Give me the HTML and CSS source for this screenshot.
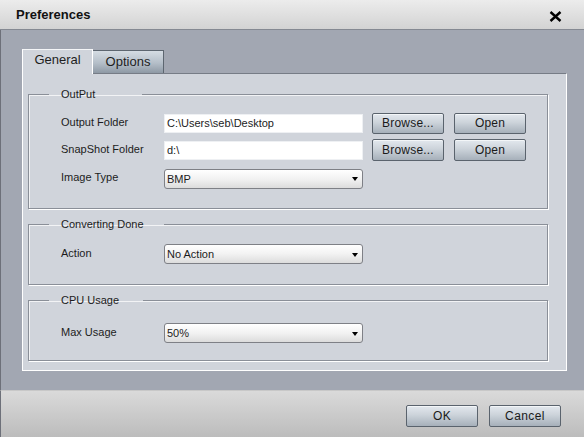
FILE: index.html
```html
<!DOCTYPE html>
<html>
<head>
<meta charset="utf-8">
<link rel="stylesheet" href="styles.css">
</head>
<body>
<div class="window">
  <div class="titlebar">
    <span class="title">Preferences</span>
    <svg class="close" width="13" height="11" viewBox="0 0 13 11"><path d="M1.5 1 L11.5 10 M11.5 1 L1.5 10" stroke="#000" stroke-width="2.4" fill="none"/></svg>
  </div>
  <div class="main">
    <div class="tabs">
      <div class="tab tab-active">General</div>
      <div class="tab tab-inactive">Options</div>
    </div>
    <div class="panel">
      <fieldset class="group group-output">
        <legend class="legend legend-output">OutPut</legend>
        <div class="row">
          <span class="label">Output Folder</span>
          <div class="input">C:\Users\seb\Desktop</div>
          <div class="btn btn-browse">Browse...</div>
          <div class="btn btn-open">Open</div>
        </div>
        <div class="row row-2">
          <span class="label">SnapShot Folder</span>
          <div class="input">d:\</div>
          <div class="btn btn-browse">Browse...</div>
          <div class="btn btn-open">Open</div>
        </div>
        <div class="row row-3">
          <span class="label">Image Type</span>
          <div class="select"><span>BMP</span><span class="arrow"></span></div>
        </div>
      </fieldset>
      <fieldset class="group group-done">
        <legend class="legend legend-done">Converting Done</legend>
        <div class="row row-sel">
          <span class="label">Action</span>
          <div class="select"><span>No Action</span><span class="arrow"></span></div>
        </div>
      </fieldset>
      <fieldset class="group group-cpu">
        <legend class="legend legend-cpu">CPU Usage</legend>
        <div class="row row-sel">
          <span class="label">Max Usage</span>
          <div class="select"><span>50%</span><span class="arrow"></span></div>
        </div>
      </fieldset>
    </div>
  </div>
  <div class="footer">
    <div class="btn btn-footer">OK</div>
    <div class="btn btn-footer btn-cancel">Cancel</div>
  </div>
</div>
</body>
</html>
```

FILE: styles.css
```css
* { box-sizing: border-box; }
html, body { margin: 0; padding: 0; }
body {
  width: 584px;
  height: 437px;
  overflow: hidden;
  font-family: "Liberation Sans", Arial, sans-serif;
  color: #1c1c1c;
  background: #a2a7b2;
}
.window {
  width: 584px;
  height: 437px;
  display: flex;
  flex-direction: column;
}
.titlebar {
  height: 30px;
  flex: none;
  display: flex;
  align-items: center;
  justify-content: space-between;
  padding: 0 22px 0 16px;
  background: linear-gradient(#ececec, #d3d3d3);
  border-bottom: 1px solid #858992;
}
.title {
  font-weight: bold;
  font-size: 13px;
  color: #111;
  margin-top: -1px;
}
.close { margin-top: 3px; }
.main {
  flex: none;
  height: 360px;
  padding: 19px 17px 0 21px;
  background: #a2a7b2;
  border-left: 1px solid #6d7079;
  display: flex;
  flex-direction: column;
}
.tabs {
  display: flex;
  align-items: flex-end;
  height: 24px;
  flex: none;
}
.tab {
  font-size: 13px;
  text-align: center;
  line-height: 20px;
  padding-bottom: 2px;
  color: #1e1e1e;
}
.tab-active {
  width: 71px;
  height: 25px;
  margin-bottom: -1px;
  background: #d0d4db;
  border-top: 1px solid #f4f5f7;
  border-left: 1px solid #ffffff;
  border-right: 1px solid #ffffff;
  position: relative;
  z-index: 1;
}
.tab-inactive {
  width: 71px;
  height: 23px;
  line-height: 22px;
  padding: 0;
  background: linear-gradient(#d5dce3, #b4bec8 55%, #8e99a5);
  border: 1px solid #5d6670;
  border-bottom: none;
  border-left: none;
}
.panel {
  height: 298px;
  flex: none;
  background: #d0d4db;
  border-top: 1px solid #767c86;
  border-left: 1px solid #ffffff;
  border-right: 1px solid #ffffff;
  border-bottom: 1px solid #ffffff;
  padding: 14px 18px 0 5px;
  display: flex;
  flex-direction: column;
}
.group {
  margin: 0;
  padding: 0 0 0 32px;
  border: 1px solid #8a8f98;
  box-shadow: 1px 1px 0 #ffffff, inset 1px 1px 0 #f2f3f5;
  min-width: 0;
}
.group-output { padding-top: 12px; padding-bottom: 19px; }
.group-done { margin-top: 9px; padding-top: 13px; padding-bottom: 20px; }
.group-cpu { margin-top: 9px; padding-top: 16px; padding-bottom: 17px; }
.legend {
  font-size: 11px;
  line-height: 13px;
  padding: 0 0 0 12px;
  margin-left: -12px;
  color: #1c1c1c;
}
.legend-output { width: 93px; }
.legend-done { width: 115px; }
.legend-cpu { width: 94px; }
.row {
  display: flex;
  align-items: center;
  height: 21px;
}
.row-2 { margin-top: 5px; height: 22px; }
.row-3 { margin-top: 7px; }
.row-sel { height: 20px; }
.label {
  width: 103px;
  flex: none;
  font-size: 11px;
  margin-top: -3px;
}
.input {
  width: 199px;
  height: 19px;
  flex: none;
  background: #ffffff;
  border: 1px solid #eef0f3;
  font-size: 11px;
  line-height: 17px;
  padding-left: 2px;
}
.select {
  width: 199px;
  height: 20px;
  flex: none;
  display: flex;
  align-items: center;
  justify-content: space-between;
  border: 1px solid #7e8086;
  border-radius: 3px;
  background: linear-gradient(#ffffff, #f2f2f2 50%, #dcdcdc);
  font-size: 11px;
  padding: 0 4px 0 2px;
}
.arrow {
  width: 0;
  height: 0;
  border-left: 3.5px solid transparent;
  border-right: 3.5px solid transparent;
  border-top: 4px solid #000;
  margin-top: 1px;
}
.btn {
  flex: none;
  width: 72px;
  height: 21px;
  border: 1px solid #5a636d;
  border-radius: 2px;
  background: linear-gradient(#e3e8ee, #ccd3da 45%, #a6b0ba);
  box-shadow: inset 0 1px 0 #f3f6f8;
  font-size: 12px;
  text-align: center;
  line-height: 19px;
  color: #1a1a1a;
  letter-spacing: 0.2px;
}
.row-2 .btn { height: 22px; line-height: 20px; }
.btn-browse { margin-left: 9px; }
.btn-open { margin-left: 10px; }
.footer {
  flex: 1;
  display: flex;
  justify-content: flex-end;
  align-items: flex-start;
  padding: 14px 23px 0 0;
  gap: 11px;
  background: linear-gradient(#dadada, #bcbcbc);
  border-top: 1px solid #c8c8c8;
  border-left: 1px solid #6d7079;
}
.btn-footer {
  width: 72px;
  height: 22px;
  line-height: 20px;
  letter-spacing: 0.4px;
}
```
